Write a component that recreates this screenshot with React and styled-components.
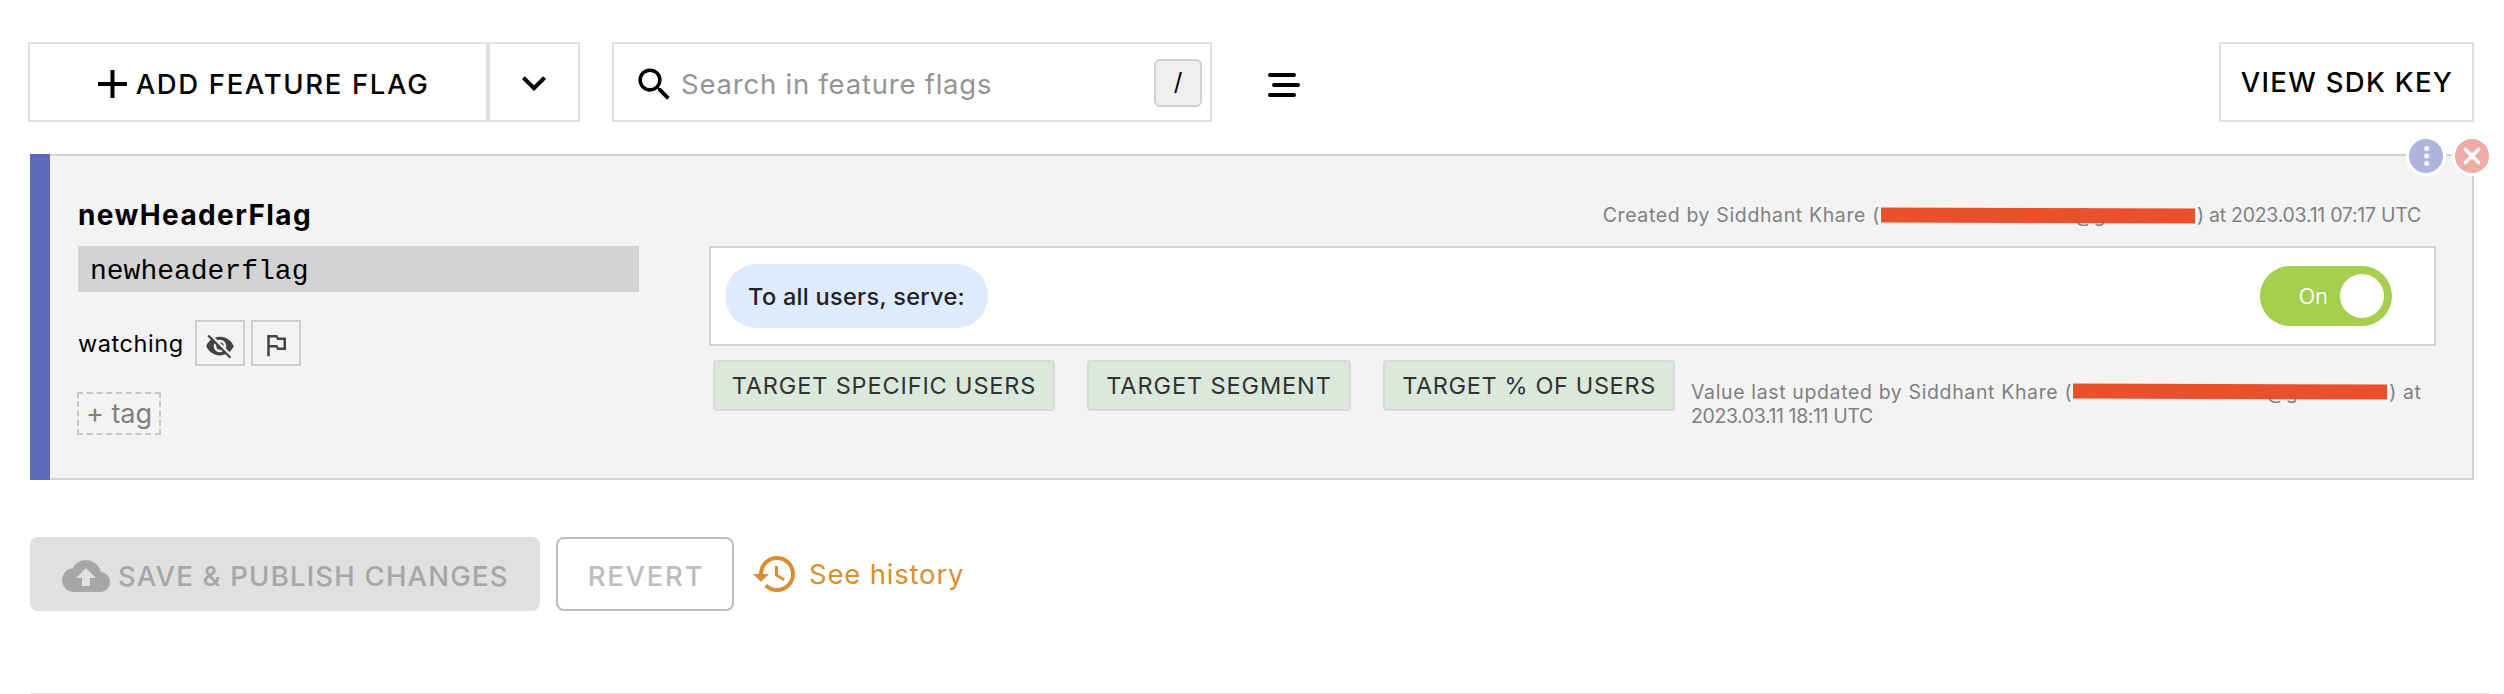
import React from 'react';
import styled, { createGlobalStyle } from 'styled-components';
import {
  MdSearch,
  MdExpandMore,
  MdVisibilityOff,
  MdOutlinedFlag,
  MdCloudUpload,
  MdHistory,
} from 'react-icons/md';

const GlobalStyle = createGlobalStyle`
  * { box-sizing: border-box; }
  body {
    margin: 0;
    background: #fff;
    color: #000;
    font-family: Inter, "Liberation Sans", sans-serif;
    overflow: hidden;
  }
  button { font-family: inherit; margin: 0; cursor: pointer; }
  svg { display: block; flex: none; }
`;

const Page = styled.main`
  padding: 42px 30px 0 28px;
`;

/* ---------- toolbar ---------- */

const Toolbar = styled.header`
  display: flex;
  height: 80px;
`;

const ToolbarButton = styled.button`
  display: flex;
  align-items: center;
  justify-content: center;
  width: ${(p) => p.$width}px;
  padding: ${(p) => p.$padTop || 0}px 0 0 ${(p) => p.$padLeft || 0}px;
  border: 2px solid #e0e0e0;
  background: #fff;
  color: #000;
  font-size: 27.5px;
  font-weight: 500;
  letter-spacing: ${(p) => p.$tracking || 0}px;
  white-space: nowrap;
`;

const AddIcon = styled.svg`
  width: 29px;
  height: 28px;
  margin-right: 9px;
`;

const SearchBox = styled.label`
  display: flex;
  align-items: center;
  width: 600px;
  margin-left: 32px;
  padding: 0 8px 0 19px;
  border: 2px solid #e0e0e0;
  svg { margin-top: 5px; }
`;

const SearchText = styled.span`
  flex: 1;
  padding: 4px 0 0 5px;
  color: #949494;
  font-size: 27.5px;
  letter-spacing: 0.78px;
`;

const KeyCap = styled.kbd`
  display: flex;
  align-items: center;
  justify-content: center;
  width: 48px;
  height: 48px;
  margin-top: 2px;
  padding-bottom: 4px;
  border: 2px solid #cfcfcf;
  border-radius: 6px;
  background: #efefef;
  font: 400 24px Inter, sans-serif;
`;

const MenuIcon = styled.svg`
  width: 32px;
  height: 24px;
  margin: 31px auto 0 56px;
`;

/* ---------- flag card ---------- */

const Card = styled.section`
  position: relative;
  display: flex;
  height: 326px;
  margin: 32px 0 0 2px;
`;

const Accent = styled.div`
  width: 20px;
  background: #5f6ab9;
`;

const CardBody = styled.div`
  display: flex;
  flex: 1;
  justify-content: space-between;
  padding: 42px 36px 0 28px;
  border: 2px solid #d3d3d3;
  border-left: 0;
  background: #f3f3f3;
`;

const CornerActions = styled.div`
  position: absolute;
  top: -18px;
  right: -18px;
  display: flex;
  gap: 6px;
`;

const RoundButton = styled.button`
  display: flex;
  align-items: center;
  justify-content: center;
  width: 40px;
  height: 40px;
  padding: 0;
  border: 3px solid #fff;
  border-radius: 50%;
  background: ${(p) => p.$color};
`;

const Summary = styled.div`
  width: 561px;
`;

const FlagName = styled.h2`
  margin: 0;
  font-size: 28px;
  font-weight: 700;
  line-height: 34px;
  letter-spacing: 1.4px;
`;

const FlagKey = styled.div`
  height: 46px;
  margin-top: 14px;
  padding: 5px 12px 0;
  background: #d3d3d3;
  font: 28px/41px "Liberation Mono", monospace;
`;

const WatchRow = styled.div`
  display: flex;
  align-items: center;
  gap: 6px;
  margin-top: 28px;
`;

const WatchLabel = styled.span`
  width: 111px;
  font-size: 23.5px;
  letter-spacing: 0.56px;
`;

const SquareButton = styled.button`
  display: flex;
  justify-content: center;
  width: 50px;
  height: 46px;
  padding: ${(p) => p.$padTop}px 0 0;
  border: 2px solid #cdcdcd;
  background: transparent;
  color: #424242;
`;

const AddTag = styled.button`
  display: flex;
  align-items: center;
  justify-content: center;
  width: 84px;
  height: 43px;
  margin: 26px 0 0 -1px;
  padding: 0;
  border: 2px dashed #c6c6c6;
  background: transparent;
  color: #808080;
  font-size: 27px;
`;

const Targeting = styled.div`
  width: 1727px;
`;

const Meta = styled.p`
  margin: 0;
  color: #808080;
  font-size: 19.5px;
  line-height: 24px;
  letter-spacing: 0.63px;
`;

const CreatedMeta = styled(Meta)`
  display: flex;
  justify-content: flex-end;
  padding: 5px 15px 0 0;
`;

const UpdatedMeta = styled(Meta)`
  margin: 20px 0 0 16px;
`;

const MetaLine = styled.span`
  display: flex;
`;

const Stamp = styled.span`
  letter-spacing: ${(p) => p.$tracking}px;
`;

const Redacted = styled.span`
  position: relative;
  width: ${(p) => p.$width}px;
  padding-left: 194px;
  &::after {
    content: '';
    position: absolute;
    top: ${(p) => p.$top}px;
    left: 1px;
    right: 2px;
    height: 15px;
    background: #eb502c;
    transform: rotate(0.15deg);
  }
`;

const Rule = styled.div`
  display: flex;
  align-items: center;
  justify-content: space-between;
  height: 100px;
  margin-top: 19px;
  padding: 0 42px 0 14px;
  border: 2px solid #d3d3d3;
  background: #fff;
`;

const Pill = styled.span`
  display: flex;
  align-items: center;
  justify-content: center;
  width: 263px;
  height: 64px;
  border-radius: 32px;
  background: #deebfd;
  color: #212121;
  font-size: 23.5px;
  font-weight: 500;
  letter-spacing: 0.3px;
`;

const Toggle = styled.div`
  display: flex;
  align-items: center;
  justify-content: flex-end;
  gap: 12px;
  width: 132px;
  height: 60px;
  padding-right: 8px;
  border-radius: 30px;
  background: #a6ce4f;
  color: #fff;
  font: 500 21px "Open Sans", sans-serif;
`;

const Knob = styled.span`
  width: 44px;
  height: 44px;
  border-radius: 50%;
  background: #fff;
`;

const TargetRow = styled.div`
  display: flex;
  margin: 14px 0 0 4px;
`;

const TargetButtons = styled.div`
  display: flex;
  gap: 32px;
`;

const TargetButton = styled.button`
  width: ${(p) => p.$width}px;
  height: 51px;
  padding: 0;
  border: 2px solid #d9d9d9;
  border-radius: 4px;
  background: #dbe9dc;
  color: #333;
  font-size: 23.5px;
  letter-spacing: ${(p) => p.$tracking}px;
  white-space: nowrap;
`;

/* ---------- footer ---------- */

const Footer = styled.footer`
  display: flex;
  align-items: center;
  height: 74px;
  margin: 57px 0 0 2px;
`;

const SaveButton = styled.button`
  display: flex;
  align-items: center;
  gap: 8px;
  width: 510px;
  height: 74px;
  padding: 3px 0 0 32px;
  border: 0;
  border-radius: 8px;
  background: #e0e0e0;
  color: #a6a6a6;
  font-size: 27.5px;
  font-weight: 500;
  letter-spacing: 1.2px;
  white-space: nowrap;
`;

const RevertButton = styled.button`
  width: 178px;
  height: 74px;
  margin-left: 16px;
  padding: 4px 0 0 2px;
  border: 2px solid #bdbdbd;
  border-radius: 8px;
  background: #fff;
  color: #bdbdbd;
  font-size: 27.5px;
  font-weight: 500;
  letter-spacing: 1.74px;
`;

const HistoryLink = styled.a`
  display: flex;
  align-items: center;
  gap: 10px;
  margin-left: 17px;
  color: #d98f30;
  font-size: 27.5px;
  letter-spacing: 0.81px;
`;

const Divider = styled.hr`
  height: 1px;
  margin: 82px -16px 0 2px;
  border: 0;
  background: #dcdcdc;
`;

export default function App() {
  return (
    <>
      <GlobalStyle />
      <Page>
        <Toolbar>
          <ToolbarButton $width={460} $padTop={4} $padLeft={11} $tracking={1.65}>
            <AddIcon viewBox="0 0 29 28">
              <path d="M14.5 0v28M0 14h29" stroke="#000" strokeWidth="4" />
            </AddIcon>
            ADD FEATURE FLAG
          </ToolbarButton>
          <ToolbarButton $width={92} $padTop={2}>
            <MdExpandMore size={48} />
          </ToolbarButton>
          <SearchBox>
            <MdSearch size={43} />
            <SearchText>Search in feature flags</SearchText>
            <KeyCap>/</KeyCap>
          </SearchBox>
          <MenuIcon viewBox="0 0 32 24">
            <path
              d="M2 2h24M6 12h24M2 22h24"
              stroke="#000"
              strokeWidth="4"
              strokeLinecap="round"
            />
          </MenuIcon>
          <ToolbarButton $width={255} $padLeft={1} $tracking={1.29}>
            VIEW SDK KEY
          </ToolbarButton>
        </Toolbar>

        <Card>
          <Accent />
          <CardBody>
            <Summary>
              <FlagName>newHeaderFlag</FlagName>
              <FlagKey>newheaderflag</FlagKey>
              <WatchRow>
                <WatchLabel>watching</WatchLabel>
                <SquareButton $padTop={9}>
                  <MdVisibilityOff size={30} />
                </SquareButton>
                <SquareButton $padTop={8}>
                  <MdOutlinedFlag size={30} />
                </SquareButton>
              </WatchRow>
              <AddTag>+ tag</AddTag>
            </Summary>
            <Targeting>
              <CreatedMeta>
                Created by Siddhant Khare (
                <Redacted $width={317} $top={5}>@g</Redacted>
                <Stamp $tracking={-0.26}>) at 2023.03.11 07:17 UTC</Stamp>
              </CreatedMeta>
              <Rule>
                <Pill>To all users, serve:</Pill>
                <Toggle>
                  On
                  <Knob />
                </Toggle>
              </Rule>
              <TargetRow>
                <TargetButtons>
                  <TargetButton $width={342} $tracking={0.86}>
                    TARGET SPECIFIC USERS
                  </TargetButton>
                  <TargetButton $width={264} $tracking={0.9}>
                    TARGET SEGMENT
                  </TargetButton>
                  <TargetButton $width={292} $tracking={0.63}>
                    TARGET % OF USERS
                  </TargetButton>
                </TargetButtons>
                <UpdatedMeta>
                  <MetaLine>
                    Value last updated by Siddhant Khare (
                    <Redacted $width={317} $top={4}>@g</Redacted>) at
                  </MetaLine>
                  <Stamp $tracking={-0.4}>2023.03.11 18:11 UTC</Stamp>
                </UpdatedMeta>
              </TargetRow>
            </Targeting>
          </CardBody>
          <CornerActions>
            <RoundButton $color="#b0b4dd">
              <svg width="24" height="24" viewBox="0 0 24 24" fill="#fff">
                <circle cx="12.7" cy="4.4" r="2.5" />
                <circle cx="12.7" cy="12" r="2.5" />
                <circle cx="12.7" cy="19.6" r="2.5" />
              </svg>
            </RoundButton>
            <RoundButton $color="#efaca9">
              <svg width="24" height="24" viewBox="0 0 24 24">
                <path
                  d="M5.5 5.5l13 13M18.5 5.5l-13 13"
                  stroke="#fff"
                  strokeWidth="3.6"
                  strokeLinecap="round"
                />
              </svg>
            </RoundButton>
          </CornerActions>
        </Card>

        <Footer>
          <SaveButton>
            <MdCloudUpload size={48} />
            SAVE &amp; PUBLISH CHANGES
          </SaveButton>
          <RevertButton>REVERT</RevertButton>
          <HistoryLink>
            <MdHistory size={48} />
            See history
          </HistoryLink>
        </Footer>
        <Divider />
      </Page>
    </>
  );
}
